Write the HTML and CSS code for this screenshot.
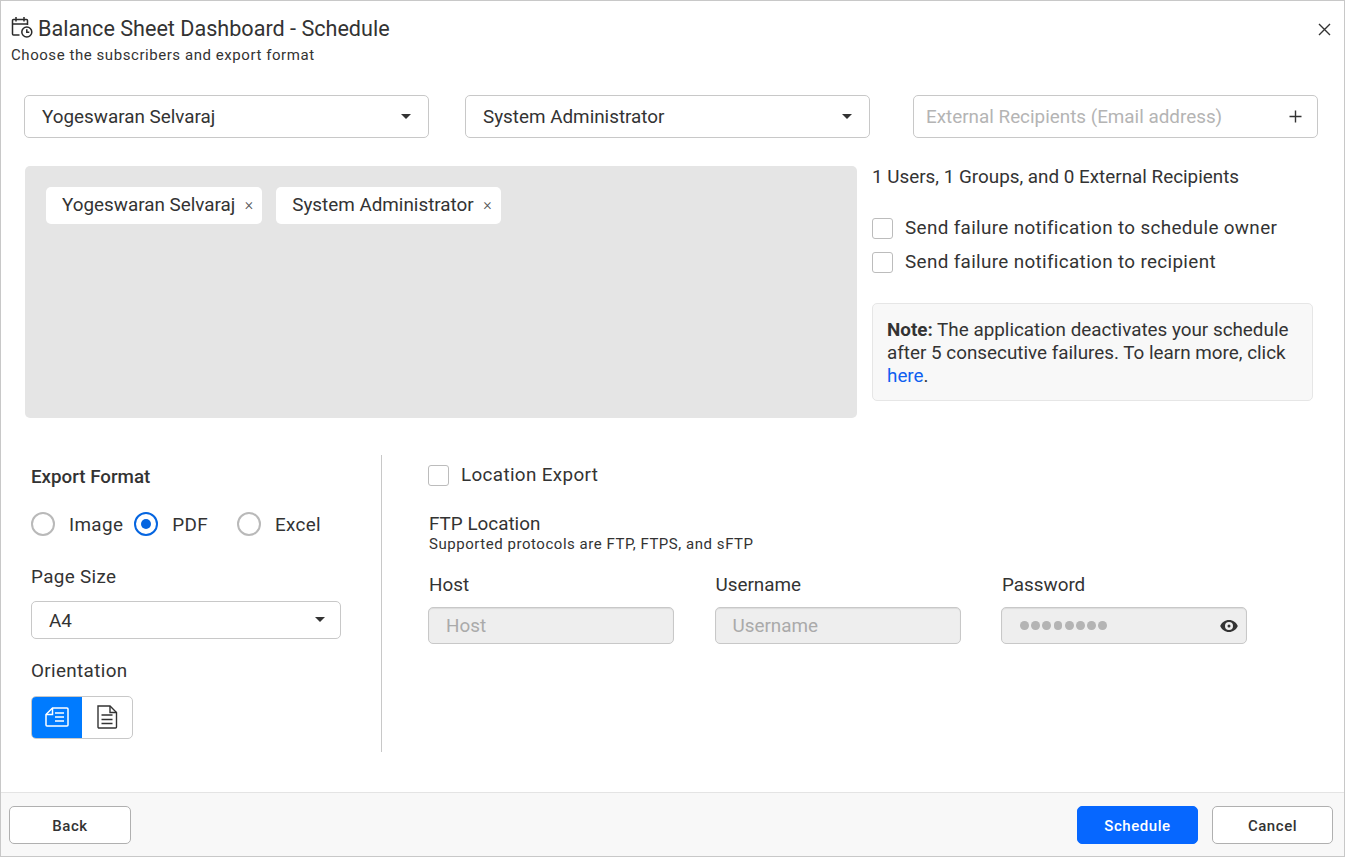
FILE: index.html
```html
<!DOCTYPE html>
<html lang="en">
<head>
<meta charset="utf-8">
<title>Balance Sheet Dashboard - Schedule</title>
<link rel="stylesheet" href="styles.css">
</head>
<body>
<div class="dialog">
  <header class="head">
    <div class="head-text">
      <h1 class="title">
        <svg class="cal" width="22" height="22" viewBox="0 0 22 22" fill="none" stroke="#2b2b2b" stroke-width="1.500"><path d="M8.500 19H2.500a1 1 0 0 1-1-1V4.500a1 1 0 0 1 1-1h13a1 1 0 0 1 1 1V9"/><path d="M1.500 8h15M5 1v4.500M13 1v4.500"/><circle cx="15.800" cy="16" r="5"/><path d="M15.800 13.300V16.300h2.500"/></svg>
        <span>Balance Sheet Dashboard - Schedule</span>
      </h1>
      <p class="sub">Choose the subscribers and export format</p>
    </div>
    <svg class="close" width="13" height="13" viewBox="0 0 13 13" stroke="#333" stroke-width="1.400"><path d="M1 1l11 11M12 1L1 12"/></svg>
  </header>

  <div class="pickers">
    <div class="field select"><span>Yogeswaran Selvaraj</span><i class="caret"></i></div>
    <div class="field select"><span>System Administrator</span><i class="caret"></i></div>
    <div class="field select ext"><span class="ph">External Recipients (Email address)</span>
      <svg width="13" height="13" viewBox="0 0 13 13" stroke="#333" stroke-width="1.400"><path d="M6.500 0.500v12M0.500 6.500h12"/></svg>
    </div>
  </div>

  <div class="subs">
    <div class="chips">
      <div class="chip"><span>Yogeswaran Selvaraj</span><b>×</b></div>
      <div class="chip"><span>System Administrator</span><b>×</b></div>
    </div>
    <div class="side">
      <p class="count">1 Users, 1 Groups, and 0 External Recipients</p>
      <label class="check first"><i class="box"></i><span>Send failure notification to schedule owner</span></label>
      <label class="check"><i class="box"></i><span>Send failure notification to recipient</span></label>
      <div class="note"><strong>Note:</strong> The application deactivates your schedule after 5 consecutive failures. To learn more, click <a href="#">here</a>.</div>
    </div>
  </div>

  <div class="lower">
    <section class="export">
      <h2 class="export-title">Export Format</h2>
      <div class="radios">
        <label class="radio r1"><i class="dot"></i><span class="rt">Image</span></label>
        <label class="radio r2"><i class="dot on"></i><span class="rt">PDF</span></label>
        <label class="radio"><i class="dot"></i><span class="rt">Excel</span></label>
      </div>
      <div class="lbl page-lbl">Page Size</div>
      <div class="field select small"><span>A4</span><i class="caret"></i></div>
      <div class="lbl orient-lbl">Orientation</div>
      <div class="toggle">
        <div class="tg active">
          <svg class="tg-icon" width="24" height="20" viewBox="0 0 24 20" fill="none" stroke="#fff" stroke-width="1.500"><path d="M7.500 1H22a1 1 0 0 1 1 1V18a1 1 0 0 1-1 1H2a1 1 0 0 1-1-1V7.500z"/><path d="M7.500 1V7.500H1"/><path d="M10 6h9M10 10h9M10 14h9" stroke-width="1.600"/></svg>
        </div>
        <div class="tg">
          <svg class="tg-icon" width="22" height="24" viewBox="0 0 22 24" fill="none" stroke="#333" stroke-width="1.400"><path d="M2 1h12l6.500 6.500V22a1 1 0 0 1-1 1H3a1 1 0 0 1-1-1z"/><path d="M14 1v6.500h6.500"/><path d="M5.500 10h11M5.500 14.500h11M5.500 18.500h11"/></svg>
        </div>
      </div>
    </section>
    <section class="location">
      <label class="check loc"><i class="box"></i><span>Location Export</span></label>
      <div class="ftp">FTP Location</div>
      <div class="proto">Supported protocols are FTP, FTPS, and sFTP</div>
      <div class="creds">
        <div><div class="lbl">Host</div><div class="field input"><span>Host</span></div></div>
        <div><div class="lbl">Username</div><div class="field input"><span>Username</span></div></div>
        <div><div class="lbl">Password</div><div class="field input pw"><span class="dots"><i></i><i></i><i></i><i></i><i></i><i></i><i></i><i></i></span>
          <svg width="18" height="12" viewBox="0 0 18 12"><path fill="#333" fill-rule="evenodd" d="M9 0C5 0 1.700 2.500 0.200 6 1.700 9.500 5 12 9 12s7.300-2.500 8.800-6C16.300 2.500 13 0 9 0zm0 10a4 4 0 1 1 0-8 4 4 0 0 1 0 8zm0-2.500a1.500 1.500 0 1 0 0-3 1.500 1.500 0 0 0 0 3z"/></svg>
        </div></div>
      </div>
    </section>
  </div>

  <footer class="foot">
    <button class="btn">Back</button>
    <div class="foot-right">
      <button class="btn primary">Schedule</button>
      <button class="btn narrow">Cancel</button>
    </div>
  </footer>
</div>
</body>
</html>
```

FILE: styles.css
```css
* { box-sizing: border-box; }
html, body { margin: 0; height: 100%; background: #fff; }
body { font-family: Roboto, "Liberation Sans", sans-serif; color: #333; font-size: 18.85px; overflow: hidden; }
i, b { font-style: normal; }
h1, h2, p { margin: 0; font-weight: 400; }
.dialog { width: 1345px; height: 857px; border: 1px solid #c8c8c8; display: flex; flex-direction: column; background: #fff; }
.head { display: flex; justify-content: space-between; padding: 14px 13px 0 10px; height: 94px; }
.title { display: flex; align-items: center; gap: 5px; font-size: 21.6px; line-height: 28px; color: #333; }
.cal { flex: none; margin-left: 0; margin-bottom: 4px; }
.sub { font-size: 15px; line-height: 18px; letter-spacing: 0.56px; margin-top: 3px; }
.close { margin-top: 8px; }
.pickers { display: flex; gap: 36px; padding-left: 23px; }
.pickers .field { width: 405px; height: 43px; }
.pickers .ext { margin-left: 7px; }
.field { border: 1px solid #c8c8c8; border-radius: 5px; display: flex; align-items: center; justify-content: space-between; background: #fff; }
.select { padding: 0 17px 0 17px; }
.ph { color: #b4b4b4; }
.ext { padding: 0 15px 0 12px; }
.caret { width: 0; height: 0; border-left: 5px solid transparent; border-right: 5px solid transparent; border-top: 5px solid #333; margin-top: -1px; }
.subs { display: flex; padding-left: 24px; margin-top: 28px; height: 252px; }
.chips { width: 832px; height: 252px; background: #e5e5e5; border-radius: 5px; padding: 21px 21px; display: flex; gap: 14px; align-items: flex-start; }
.chip { display: flex; align-items: center; height: 37px; padding: 0 9px 2px 16px; background: #fff; border-radius: 5px; white-space: nowrap; }
.chip b { font-weight: 300; font-size: 16px; margin-left: 9.5px; color: #555; }
.side { margin-left: 15px; width: 441px; }
.count { line-height: 22px; }
.check { display: flex; align-items: center; gap: 12px; height: 22px; letter-spacing: 0.35px; }
.check.first { margin-top: 29px; margin-bottom: 12px; }
.box { width: 21px; height: 21px; border: 1px solid #bcbcbc; border-radius: 3px; background: #fff; flex: none; }
.note { margin-top: 30px; height: 98px; padding: 15px 14px; background: #f8f8f8; border: 1px solid #e6e6e6; border-radius: 5px; line-height: 23px; }
.note a { color: #0f5ff0; text-decoration: none; }
.note strong { font-weight: 700; }
.lower { display: flex; margin-top: 37px; padding-left: 30px; height: 297px; }
.export { width: 351px; border-right: 1px solid #c8c8c8; }
.export-title { font-size: 18.75px; font-weight: 500; line-height: 22px; margin-top: 11px; }
.radios { display: flex; align-items: center; margin-top: 23px; height: 26px; }
.radio { display: flex; align-items: center; gap: 14px; letter-spacing: 0.35px; }
.rt { padding-top: 2px; }
.r1 { margin-right: 11px; }
.r2 { margin-right: 29px; }
.dot { width: 24px; height: 24px; border: 2px solid #b9b9b9; border-radius: 50%; display: flex; align-items: center; justify-content: center; }
.dot.on { border-color: #0565e0; }
.dot.on::after { content: ""; width: 10px; height: 10px; background: #0565e0; border-radius: 50%; }
.lbl { line-height: 22px; letter-spacing: 0.35px; }
.page-lbl { margin-top: 29px; }
.small { width: 310px; height: 38px; margin-top: 13px; padding-right: 15px; }
.small span { padding-top: 2px; }
.orient-lbl { margin-top: 21px; }
.toggle { display: flex; width: 102px; height: 43px; margin-top: 14px; border: 1px solid #c8c8c8; border-radius: 5px; overflow: hidden; }
.tg { width: 50px; display: flex; align-items: center; justify-content: center; }
.tg.active { background: #007bff; }
.tg-icon { margin-bottom: 2px; }
.location { padding-left: 46px; flex: 1; }
.loc { margin-top: 9px; }
.ftp { line-height: 22px; margin-top: 27px; padding-left: 1px; }
.proto { font-size: 15px; line-height: 18px; letter-spacing: 0.54px; padding-left: 1px; }
.creds { display: grid; grid-template-columns: 246px 246px 246px; column-gap: 40.5px; margin-top: 21px; }
.creds .lbl { letter-spacing: 0; padding-left: 1px; }
.input { height: 37px; margin-top: 11px; background: #eee; padding: 0 17px; color: #aaa; box-shadow: inset 0 1px 1px rgba(0,0,0,.08); }
.pw { padding: 0 8px 0 18px; }
.dots { display: flex; gap: 2.4px; }
.dots i { width: 8.8px; height: 8.8px; border-radius: 50%; background: #b4b4b4; }
.foot { height: 64px; border-top: 1px solid #e4e4e4; background: #f8f8f8; display: flex; justify-content: space-between; align-items: center; padding: 0 11px 0 8px; margin-top: auto; }
.foot-right { display: flex; gap: 14px; }
.btn { width: 122px; height: 38px; padding-top: 3px; border: 1px solid #b0b0b0; border-radius: 5px; background: #fff; color: #333; font: 500 15px Roboto, "Liberation Sans", sans-serif; letter-spacing: 0.55px; }
.narrow { width: 121px; }
.primary { width: 121px; background: #0667ff; border-color: #0667ff; color: #fff; }
```
